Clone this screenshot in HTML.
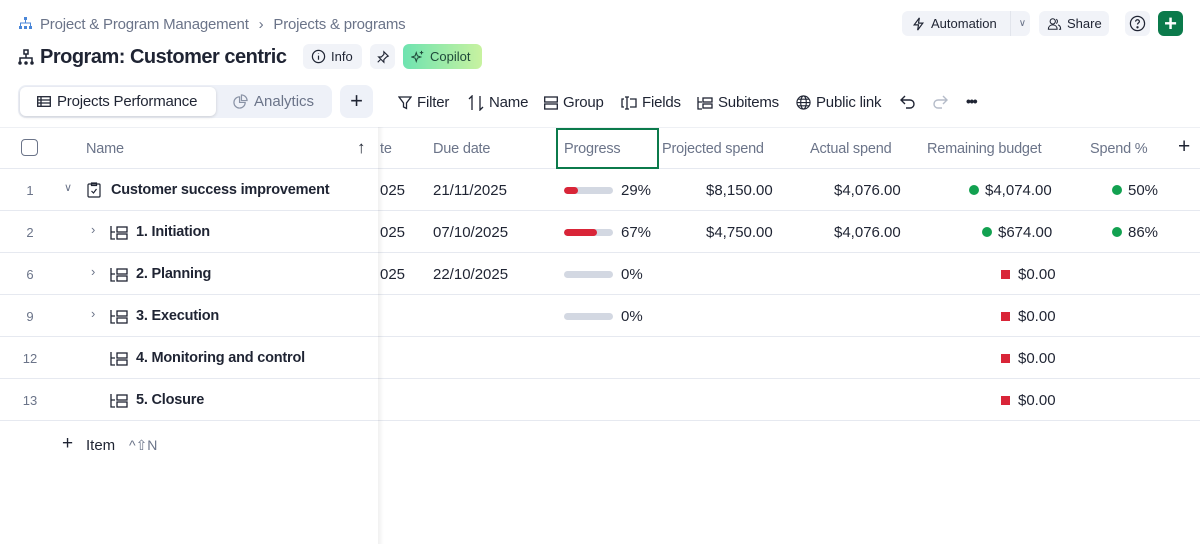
<!DOCTYPE html>
<html><head><meta charset="utf-8"><style>
*{box-sizing:border-box;margin:0;padding:0}
body{width:1200px;height:544px;overflow:hidden;background:#fff;font-family:"Liberation Sans",sans-serif;color:#1f2433;position:relative}
.abs{position:absolute}
.btn{position:absolute;background:#f1f3f8;border-radius:6px;display:flex;align-items:center;font-size:13px;color:#1f2433}
svg{display:block}
.tb{position:absolute;top:94px;font-size:15px;display:flex;align-items:center;gap:5px;color:#1f2433;letter-spacing:-0.2px}
.hd{position:absolute;top:141px;font-size:14.5px;color:#6b7489;letter-spacing:-0.2px}
.row{position:absolute;left:0;width:1200px;height:42px;border-bottom:1px solid #e6e9f0}
.num{position:absolute;font-size:13px;color:#6b7489;width:40px;text-align:center;left:10px;top:14px}
.nm{position:absolute;font-size:14.5px;font-weight:bold;top:13px;letter-spacing:-0.2px}
.c{position:absolute;font-size:15px;top:13px}
.bar{position:absolute;left:564px;top:18px;width:49px;height:7px;border-radius:4px;background:#d3d8e2;overflow:hidden}
.bar i{display:block;height:7px;background:#d92538;border-radius:4px}
.dot{display:inline-block;width:10px;height:10px;border-radius:50%;background:#12a150;margin-right:6px;vertical-align:0px}
.sq{display:inline-block;width:9px;height:9px;background:#d92538;margin-right:8px}
</style></head><body>
<!-- breadcrumb -->
<svg class="abs" style="left:19px;top:17px" width="13" height="13" viewBox="0 0 13 13" fill="#4a86d8"><rect x="5" y="0" width="3" height="3"/><rect x="0" y="9" width="3" height="3"/><rect x="5" y="9" width="3" height="3"/><rect x="10" y="9" width="3" height="3"/><path d="M6.5 3v3M1.5 9V6h10v3" stroke="#4a86d8" fill="none"/></svg>
<div class="abs" style="left:40px;top:16px;font-size:15px;color:#6b7489;letter-spacing:-0.2px">Project &amp; Program Management <span style="margin:0 6px">›</span> Projects &amp; programs</div>
<!-- title -->
<svg class="abs" style="left:18px;top:49px" width="16" height="16" viewBox="0 0 16 16" fill="none" stroke="#1f2433" stroke-width="1.5"><rect x="6" y="1" width="4" height="4"/><path d="M8 5v4M2 13V9h12v4"/><circle cx="2" cy="14" r="1" fill="#1f2433"/><circle cx="8" cy="14" r="1" fill="#1f2433"/><circle cx="14" cy="14" r="1" fill="#1f2433"/></svg>
<div class="abs" style="left:40px;top:46px;font-size:20px;font-weight:bold;letter-spacing:-0.5px">Program: Customer centric</div>
<div class="btn" style="left:303px;top:44px;width:59px;height:25px;padding-left:8px;gap:5px"><svg width="15" height="15" viewBox="0 0 16 16" fill="none" stroke="#1f2433" stroke-width="1.3"><circle cx="8" cy="8" r="6.5"/><path d="M8 7v4.5M8 4.5v.5"/></svg>Info</div>
<div class="btn" style="left:370px;top:44px;width:25px;height:25px;justify-content:center"><svg width="14" height="14" viewBox="0 0 16 16" fill="none" stroke="#1f2433" stroke-width="1.3"><path d="M9 2l5 5-2 1-3 3 0 3-6-6h3l3-3z M5 11l-3 3"/></svg></div>
<div class="btn" style="left:403px;top:44px;width:79px;height:25px;background:linear-gradient(90deg,#6ee3b0,#c8f2a0);padding-left:8px;gap:5px;color:#1f4a3a"><svg width="14" height="14" viewBox="0 0 16 16" fill="none" stroke="#1f4a3a" stroke-width="1.2"><path d="M6 3l1.3 3.7L11 8l-3.7 1.3L6 13l-1.3-3.7L1 8l3.7-1.3z M12 1v4M10 3h4"/></svg>Copilot</div>
<!-- top right -->
<div class="btn" style="left:902px;top:11px;width:128px;height:25px;padding-left:10px;gap:6px"><svg width="13" height="14" viewBox="0 0 14 16" fill="none" stroke="#1f2433" stroke-width="1.3"><path d="M8 1L2 9h5l-1 6 6-8H7z"/></svg>Automation<span style="border-left:1px solid #e2e5ec;height:25px;margin-left:7px;padding-left:8px;line-height:25px;font-size:10px;color:#6b7489">∨</span></div>
<div class="btn" style="left:1039px;top:11px;width:70px;height:25px;padding-left:8px;gap:5px"><svg width="15" height="14" viewBox="0 0 16 16" fill="none" stroke="#1f2433" stroke-width="1.2"><circle cx="6" cy="5" r="3"/><path d="M1 14c0-3 2-5 5-5s5 2 5 5zM10 2.5a3 3 0 010 5M12 9c2 .5 3 2.5 3 5h-2"/></svg>Share</div>
<div class="btn" style="left:1125px;top:11px;width:25px;height:25px;justify-content:center"><svg width="17" height="17" viewBox="0 0 18 18" fill="none" stroke="#1f2433" stroke-width="1.3"><circle cx="9" cy="9" r="7.5"/><path d="M7 7a2 2 0 114 0c0 1.3-2 1.5-2 3"/><circle cx="9" cy="13" r=".6" fill="#1f2433"/></svg></div>
<div class="btn" style="left:1158px;top:11px;width:25px;height:25px;background:#0b7a4b;justify-content:center;color:#fff;font-size:22px;font-weight:bold;line-height:1">+</div>
<!-- view tabs -->
<div class="abs" style="left:18px;top:85px;width:314px;height:33px;background:#eef1f8;border-radius:8px"></div>
<div class="abs" style="left:20px;top:87px;width:196px;height:29px;background:#fff;border-radius:6px;box-shadow:0 1px 3px rgba(0,0,0,.15);display:flex;align-items:center;padding-left:17px;gap:6px;font-size:15px;letter-spacing:-0.2px"><svg width="14" height="11" viewBox="0 0 14 11" fill="none" stroke="#1f2433" stroke-width="1.3"><rect x=".7" y=".7" width="12.6" height="9.6"/><path d="M.7 4h12.6M.7 7h12.6M4 .7v9.6"/></svg>Projects Performance</div>
<div class="abs" style="left:233px;top:93px;font-size:15px;color:#6b7489;display:flex;gap:6px;align-items:center"><svg width="15" height="15" viewBox="0 0 16 16" fill="none" stroke="#8a93a6" stroke-width="1.3"><path d="M7 3a6 6 0 106 6H7z M9 1v6h6a6 6 0 00-6-6z"/></svg>Analytics</div>
<div class="abs" style="left:340px;top:85px;width:33px;height:33px;background:#eef1f8;border-radius:8px;text-align:center;line-height:31px;font-size:22px;color:#1f2433">+</div>
<!-- toolbar -->
<div class="tb" style="left:398px"><svg width="14" height="14" viewBox="0 0 14 14" fill="none" stroke="#1f2433" stroke-width="1.3"><path d="M1 1h12L8.5 7v5.5L5.5 11V7z"/></svg>Filter</div>
<div class="tb" style="left:468px"><svg width="16" height="16" viewBox="0 0 16 16" fill="none" stroke="#1f2433" stroke-width="1.3"><path d="M4 15V1L1 4M12 1v14l3-3"/></svg>Name</div>
<div class="tb" style="left:544px"><svg width="14" height="14" viewBox="0 0 14 14" fill="none" stroke="#1f2433" stroke-width="1.3"><rect x=".7" y="1" width="12.6" height="5"/><rect x=".7" y="8" width="12.6" height="5"/></svg>Group</div>
<div class="tb" style="left:621px"><svg width="16" height="14" viewBox="0 0 16 14" fill="none" stroke="#1f2433" stroke-width="1.3"><path d="M3 3H1v8h2M9 3h6v8H9M6 1v12M4 1h4M4 13h4"/></svg>Fields</div>
<div class="tb" style="left:697px"><svg width="16" height="14" viewBox="0 0 16 14" fill="none" stroke="#1f2433" stroke-width="1.3"><path d="M1 1v12h4M1 6h4"/><rect x="6" y="2" width="9" height="4"/><rect x="6" y="8" width="9" height="4"/></svg>Subitems</div>
<div class="tb" style="left:796px"><svg width="15" height="15" viewBox="0 0 16 16" fill="none" stroke="#1f2433" stroke-width="1.2"><circle cx="8" cy="8" r="7"/><ellipse cx="8" cy="8" rx="3" ry="7"/><path d="M1 8h14M2 4.5h12M2 11.5h12"/></svg>Public link</div>
<svg class="abs" style="left:900px;top:95px" width="16" height="14" viewBox="0 0 16 14" fill="none" stroke="#1f2433" stroke-width="1.4"><path d="M5 1L1 5l4 4M1 5h9a4 4 0 010 8H6"/></svg>
<svg class="abs" style="left:932px;top:95px" width="16" height="14" viewBox="0 0 16 14" fill="none" stroke="#b5bcc9" stroke-width="1.4"><path d="M11 1l4 4-4 4M15 5H6a4 4 0 000 8h4"/></svg>
<div class="abs" style="left:966px;top:93px;font-size:14px;font-weight:bold;letter-spacing:-1.5px">•••</div>
<!-- table -->
<div class="row" style="top:127px;border-top:1px solid #eef0f4"></div>
<div class="abs" style="left:21px;top:139px;width:17px;height:17px;border:1.5px solid #6b7489;border-radius:4px"></div>
<div class="hd" style="left:86px">Name</div>
<div class="abs" style="left:357px;top:138px;font-size:17px;color:#1f2433">↑</div>
<div class="hd" style="left:380px">te</div>
<div class="hd" style="left:433px">Due date</div>
<div class="abs" style="left:556px;top:128px;width:103px;height:41px;border:2px solid #0b7a4b"></div>
<div class="hd" style="left:564px">Progress</div>
<div class="hd" style="left:662px">Projected spend</div>
<div class="hd" style="left:810px">Actual spend</div>
<div class="hd" style="left:927px">Remaining budget</div>
<div class="hd" style="left:1090px">Spend %</div>
<div class="abs" style="left:1178px;top:135px;font-size:21px;color:#1f2433">+</div>

<!-- rows -->
<div class="row" style="top:169px"><div class="num">1</div><div class="abs" style="left:64px;top:12px;font-size:11px;color:#6b7489">∨</div>
<svg class="abs" style="left:87px;top:13px" width="14" height="16" viewBox="0 0 14 16" fill="none" stroke="#1f2433" stroke-width="1.2"><rect x="1" y="2" width="12" height="13" rx="1"/><rect x="4.5" y="1" width="5" height="2.5"/><path d="M4.5 9l2 2 3-4"/></svg>
<div class="nm" style="left:111px">Customer success improvement</div>
<div class="c" style="left:380px">025</div><div class="c" style="left:433px">21/11/2025</div>
<div class="bar"><i style="width:14px"></i></div><div class="c" style="left:621px">29%</div>
<div class="c" style="left:706px">$8,150.00</div><div class="c" style="left:834px">$4,076.00</div>
<div class="c" style="left:969px"><span class="dot"></span>$4,074.00</div><div class="c" style="left:1112px"><span class="dot"></span>50%</div></div>

<div class="row" style="top:211px"><div class="num">2</div><div class="abs" style="left:91px;top:11px;font-size:13px;color:#6b7489">›</div>
<svg class="abs" style="left:110px;top:14px" width="18" height="16" viewBox="0 0 18 16" fill="none" stroke="#1f2433" stroke-width="1.3"><path d="M1 1v13h4M1 7h4"/><rect x="7" y="2" width="10" height="5"/><rect x="7" y="9" width="10" height="5"/></svg>
<div class="nm" style="left:136px">1. Initiation</div>
<div class="c" style="left:380px">025</div><div class="c" style="left:433px">07/10/2025</div>
<div class="bar"><i style="width:33px"></i></div><div class="c" style="left:621px">67%</div>
<div class="c" style="left:706px">$4,750.00</div><div class="c" style="left:834px">$4,076.00</div>
<div class="c" style="left:982px"><span class="dot"></span>$674.00</div><div class="c" style="left:1112px"><span class="dot"></span>86%</div></div>

<div class="row" style="top:253px"><div class="num">6</div><div class="abs" style="left:91px;top:11px;font-size:13px;color:#6b7489">›</div>
<svg class="abs" style="left:110px;top:14px" width="18" height="16" viewBox="0 0 18 16" fill="none" stroke="#1f2433" stroke-width="1.3"><path d="M1 1v13h4M1 7h4"/><rect x="7" y="2" width="10" height="5"/><rect x="7" y="9" width="10" height="5"/></svg>
<div class="nm" style="left:136px">2. Planning</div>
<div class="c" style="left:380px">025</div><div class="c" style="left:433px">22/10/2025</div>
<div class="bar"></div><div class="c" style="left:621px">0%</div>
<div class="c" style="left:1001px"><span class="sq"></span>$0.00</div></div>

<div class="row" style="top:295px"><div class="num">9</div><div class="abs" style="left:91px;top:11px;font-size:13px;color:#6b7489">›</div>
<svg class="abs" style="left:110px;top:14px" width="18" height="16" viewBox="0 0 18 16" fill="none" stroke="#1f2433" stroke-width="1.3"><path d="M1 1v13h4M1 7h4"/><rect x="7" y="2" width="10" height="5"/><rect x="7" y="9" width="10" height="5"/></svg>
<div class="nm" style="left:136px">3. Execution</div>
<div class="bar"></div><div class="c" style="left:621px">0%</div>
<div class="c" style="left:1001px"><span class="sq"></span>$0.00</div></div>

<div class="row" style="top:337px"><div class="num">12</div>
<svg class="abs" style="left:110px;top:14px" width="18" height="16" viewBox="0 0 18 16" fill="none" stroke="#1f2433" stroke-width="1.3"><path d="M1 1v13h4M1 7h4"/><rect x="7" y="2" width="10" height="5"/><rect x="7" y="9" width="10" height="5"/></svg>
<div class="nm" style="left:136px">4. Monitoring and control</div>
<div class="c" style="left:1001px"><span class="sq"></span>$0.00</div></div>

<div class="row" style="top:379px"><div class="num">13</div>
<svg class="abs" style="left:110px;top:14px" width="18" height="16" viewBox="0 0 18 16" fill="none" stroke="#1f2433" stroke-width="1.3"><path d="M1 1v13h4M1 7h4"/><rect x="7" y="2" width="10" height="5"/><rect x="7" y="9" width="10" height="5"/></svg>
<div class="nm" style="left:136px">5. Closure</div>
<div class="c" style="left:1001px"><span class="sq"></span>$0.00</div></div>

<div class="abs" style="left:62px;top:433px;font-size:19px;color:#1f2433">+</div>
<div class="abs" style="left:86px;top:437px;font-size:15px">Item</div>
<div class="abs" style="left:129px;top:437px;font-size:14px;color:#6b7489">^⇧N</div>
<!-- frozen shadow -->
<div class="abs" style="left:378px;top:127px;width:6px;height:417px;background:linear-gradient(90deg,rgba(0,0,0,.06),rgba(0,0,0,0))"></div>
</body></html>
